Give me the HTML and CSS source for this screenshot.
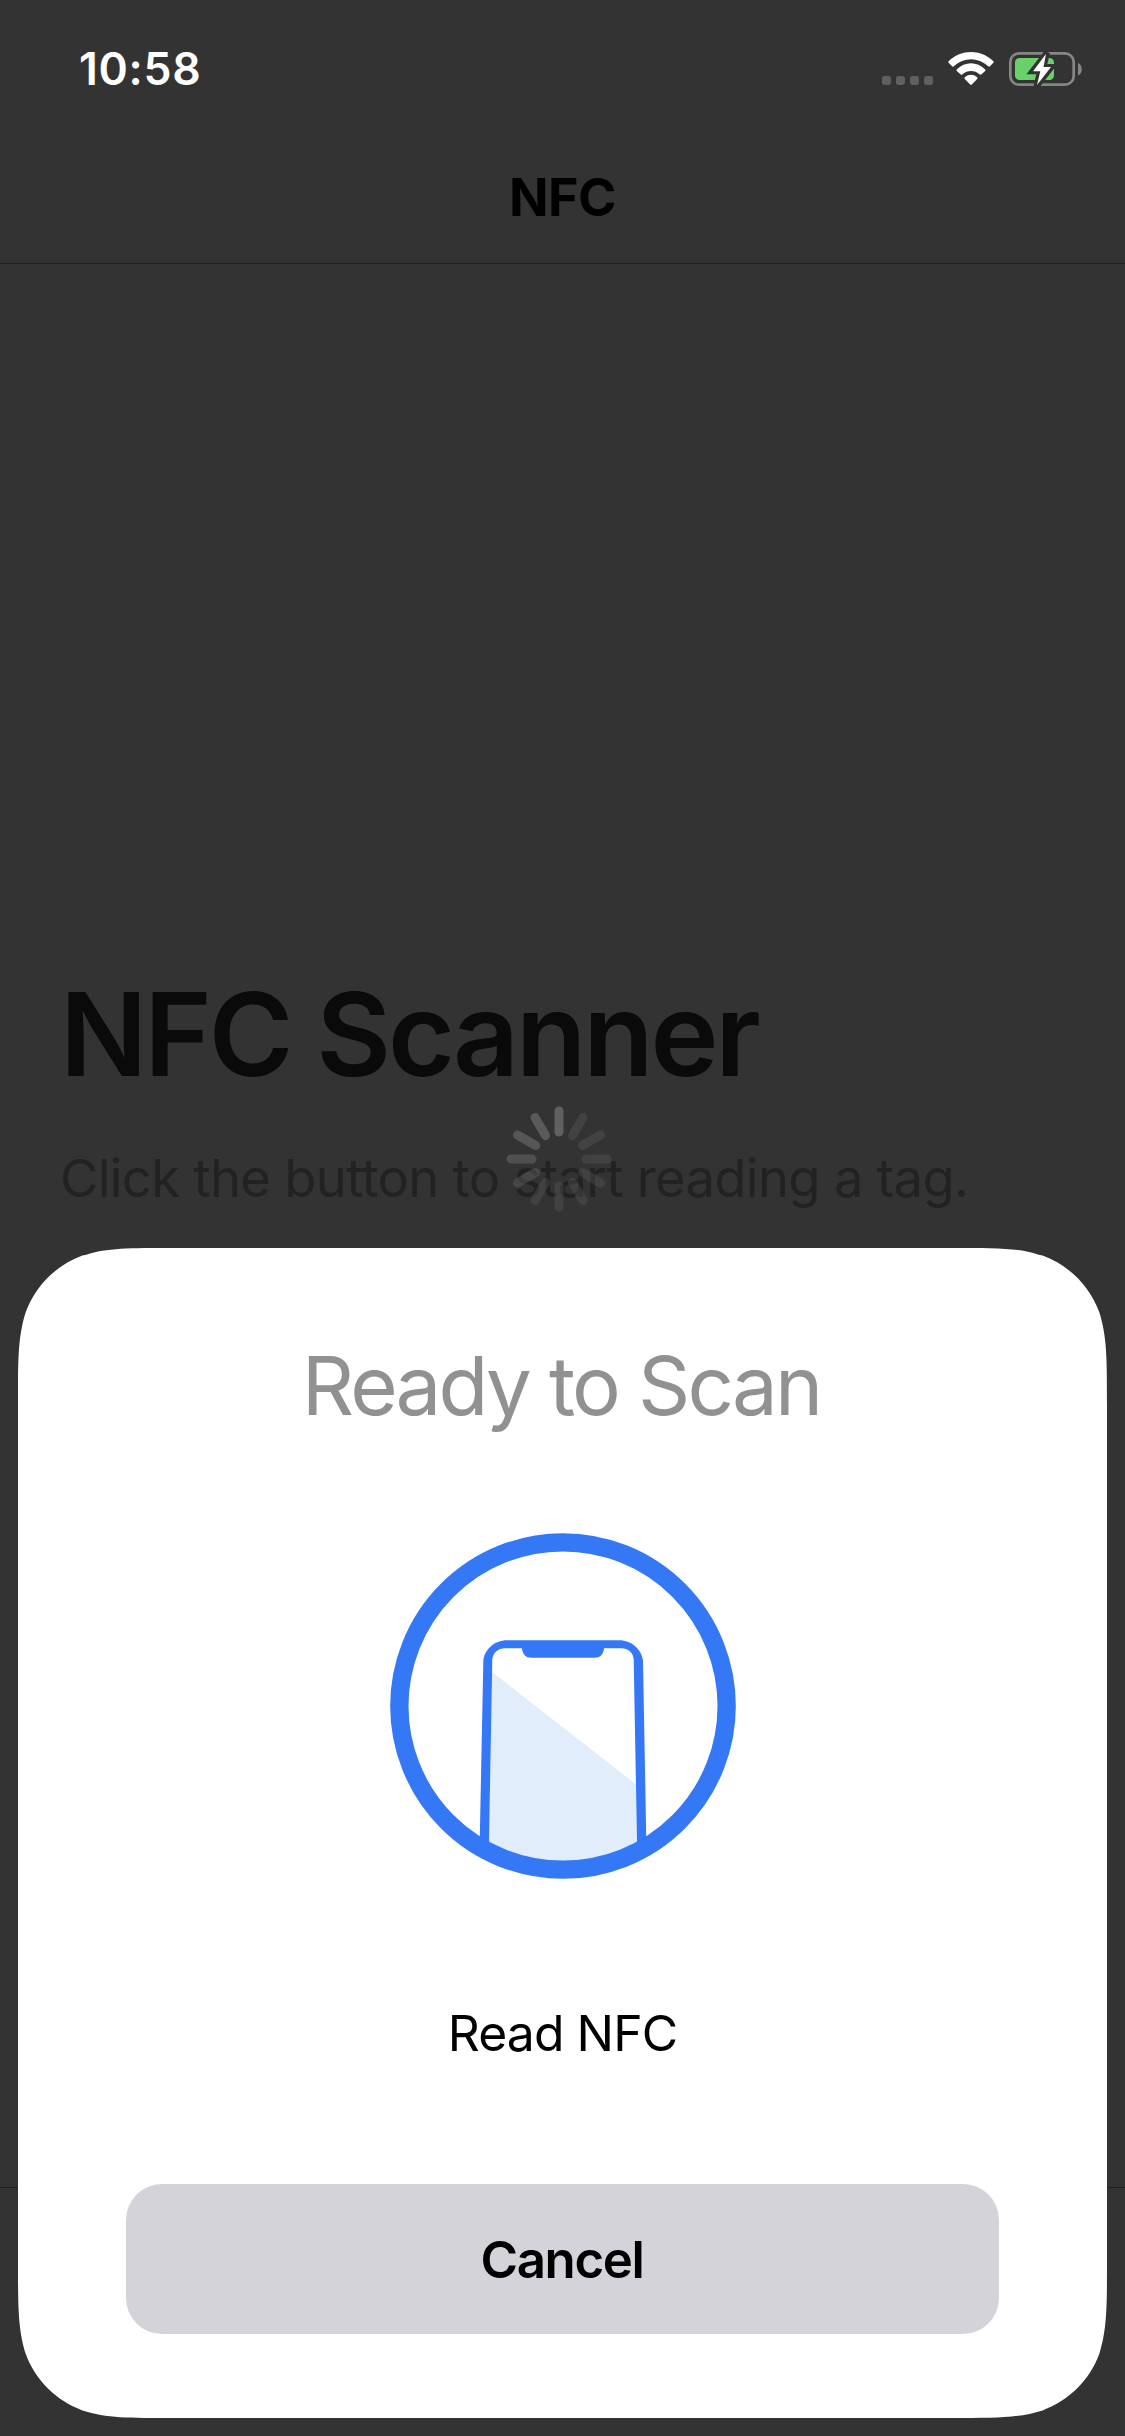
FILE: index.html
```html
<!DOCTYPE html>
<html lang="en">
<head>
<meta charset="utf-8">
<title>NFC</title>
<link rel="stylesheet" href="styles.css">
</head>
<body>
<div class="screen">
  <div class="status-bar">
    <span class="time">10:58</span>
    <svg class="status-icons" width="204" height="40" viewBox="880 49 204 40">
      <g fill="#606060">
        <rect x="882" y="76" width="9" height="9" rx="2.7"/>
        <rect x="896" y="76" width="9" height="9" rx="2.7"/>
        <rect x="910" y="76" width="9" height="9" rx="2.7"/>
        <rect x="924" y="76" width="9" height="9" rx="2.7"/>
      </g>
      <g fill="#fff">
        <path d="M948.6 61.2C961.5 49 980.5 49 993.4 61.2Q994.2 62 993.4 62.8L989.6 66.4Q989 66.9 988.3 66.3C978 56.8 964 56.8 953.7 66.3Q953 66.9 952.4 66.4L948.6 62.8Q947.8 62 948.6 61.2Z"/>
        <path d="M956.8 69.4C965 61.2 977 61.2 985.2 69.4Q986 70.2 985.2 71L981.2 74.4Q980.5 75 979.8 74.4C974.5 69.9 967.5 69.9 962.2 74.4Q961.5 75 960.8 74.4L956.8 71Q956 70.2 956.8 69.4Z"/>
        <path d="M964.8 77.3C968.6 74 973.4 74 977.2 77.3Q978 78 977.2 78.9L971.8 84.4Q971 85.2 970.2 84.4L964.8 78.9Q964 78 964.8 77.3Z"/>
      </g>
      <rect x="1010.3" y="53.3" width="63.4" height="31.4" rx="8.7" fill="none" stroke="#868686" stroke-width="2.7"/>
      <path d="M1078 63C1083 65 1083 73.600 1078 75.600Z" fill="#868686"/>
      <rect x="1015" y="58" width="39" height="22" rx="4.500" fill="#68d167"/>
      <path d="M1047 52.500L1032.500 71.300H1040L1036.500 86.500L1051.500 67H1043.500Z" fill="#333" stroke="#333" stroke-width="6"/>
      <path d="M1046 54L1033 71.300H1040.300L1037 85L1051 67H1043.500Z" fill="#fff"/>
    </svg>
  </div>
  <header class="nav-bar"><h1 class="nav-title">NFC</h1></header>
  <main class="content">
    <h2 class="heading">NFC Scanner</h2>
    <p class="hint">Click the button to start reading a tag.</p>
  </main>
  <footer class="toolbar"></footer>

  <svg class="spinner" width="106" height="106" viewBox="-53 -53 106 106">
    <g stroke-width="9" stroke-linecap="round">
      <path d="M0-48V-27" stroke="#606060"/>
      <path d="M0-48V-27" stroke="#424242" transform="rotate(30)"/>
      <path d="M0-48V-27" stroke="#424242" transform="rotate(60)"/>
      <path d="M0-48V-27" stroke="#424242" transform="rotate(90)"/>
      <g stroke="#646464" stroke-opacity=".3">
        <path d="M0-48V-27" transform="rotate(120)"/>
        <path d="M0-48V-27" transform="rotate(150)"/>
        <path d="M0-48V-27" transform="rotate(180)"/>
        <path d="M0-48V-27" transform="rotate(210)"/>
        <path d="M0-48V-27" transform="rotate(240)" stroke-opacity=".42"/>
      </g>
      <path d="M0-48V-27" stroke="#505050" transform="rotate(270)"/>
      <path d="M0-48V-27" stroke="#565656" transform="rotate(300)"/>
      <path d="M0-48V-27" stroke="#5a5a5a" transform="rotate(330)"/>
    </g>
  </svg>

  <section class="sheet">
    <h2 class="sheet-title">Ready to Scan</h2>
    <svg class="scan-icon" width="346" height="346" viewBox="60 69 1038 1038">
      <defs><clipPath id="ring"><circle cx="579" cy="588" r="490"/></clipPath></defs>
      <g clip-path="url(#ring)">
        <path d="M366 486L798 823L803 1100H355Z" fill="#e1edfb"/>
        <path d="M328 1050L340 452C343 420 372 391 412 391H747C786 391 816 420 819 452L830 1050H802L791 446C789 428 775 415 753 415H702V416C700 433 690 443 674 443H484C468 443 458 433 456 416V415H405C384 415 370 428 367 446L356 1050Z" fill="#3478f6"/>
      </g>
      <circle cx="579" cy="588" r="491" fill="none" stroke="#3478f6" stroke-width="55"/>
    </svg>
    <p class="message">Read NFC</p>
    <button class="cancel" type="button">Cancel</button>
  </section>
</div>
</body>
</html>
```
FILE: styles.css
```css
* {
  box-sizing: border-box;
}

body {
  margin: 0;
  background: #333;
  font-family: Inter, "Liberation Sans", sans-serif;
}

h1,
h2,
p {
  margin: 0;
}

.screen {
  position: relative;
  display: flex;
  flex-direction: column;
  width: 1125px;
  height: 2436px;
  overflow: hidden;
  background: #333;
}

.status-bar {
  display: flex;
  justify-content: space-between;
  align-items: center;
  height: 132px;
  padding: 6px 41px 0 79px;
}

.time {
  color: #fff;
  font-size: 44.500px;
  font-weight: 600;
  line-height: 60px;
  letter-spacing: 0.700px;
}

.nav-bar {
  display: flex;
  justify-content: center;
  align-items: center;
  height: 132px;
  border-bottom: 1px solid #202020;
}

.nav-title {
  color: #000;
  font-size: 52px;
  font-weight: 700;
  line-height: 60px;
  letter-spacing: -0.600px;
}

.content {
  flex: 1;
  padding: 701px 60px 0;
}

.heading {
  color: #0a0a0a;
  font-size: 115px;
  font-weight: 600;
  line-height: 140px;
  letter-spacing: -3.100px;
  white-space: nowrap;
}

.hint {
  margin-top: 38px;
  color: #222;
  font-size: 52.500px;
  line-height: 70px;
  letter-spacing: -0.660px;
  white-space: nowrap;
}

.toolbar {
  height: 249px;
  border-top: 1px solid #202020;
}

.spinner {
  position: absolute;
  left: 505.500px;
  top: 1105.500px;
}

.sheet {
  position: absolute;
  left: 18px;
  top: 1248px;
  display: flex;
  flex-direction: column;
  align-items: center;
  width: 1089px;
  height: 1170px;
  padding: 78px 108px 84px;
  background: #fff;
  /* continuous-curvature corners */
  clip-path: path("M156 0H933C978 0 1000.400 0 1020.700 6.700L1024.600 7.600C1051 17.200 1071.800 38 1081.400 64.400C1089 88.600 1089 111 1089 156V1014C1089 1059 1089 1081.400 1081.400 1105.600C1071.800 1132 1051 1152.800 1024.600 1162.400C1000.400 1170 978 1170 933 1170H156C111 1170 88.600 1170 64.400 1162.400C38 1152.800 17.200 1132 7.600 1105.600C0 1081.400 0 1059 0 1014V156C0 111 0 88.600 7.600 64.400C17.200 38 38 17.200 64.400 7.600L68.300 6.700C88.600 0 111 0 156 0Z");
}

.sheet-title {
  padding-right: 3px;
  color: #919191;
  font-size: 81.500px;
  font-weight: 400;
  line-height: 120px;
  letter-spacing: -2.850px;
}

.scan-icon {
  margin-top: 87px;
}

.message {
  margin-top: 119px;
  color: #000;
  font-size: 49.800px;
  line-height: 70px;
  letter-spacing: -0.900px;
}

.cancel {
  width: 873px;
  height: 150px;
  margin-top: auto;
  padding: 1px 1px 0 0;
  border: 0;
  border-radius: 36px;
  background: #d4d3d9;
  color: #000;
  font-family: inherit;
  font-size: 51px;
  font-weight: 600;
  letter-spacing: -1.350px;
}
```
